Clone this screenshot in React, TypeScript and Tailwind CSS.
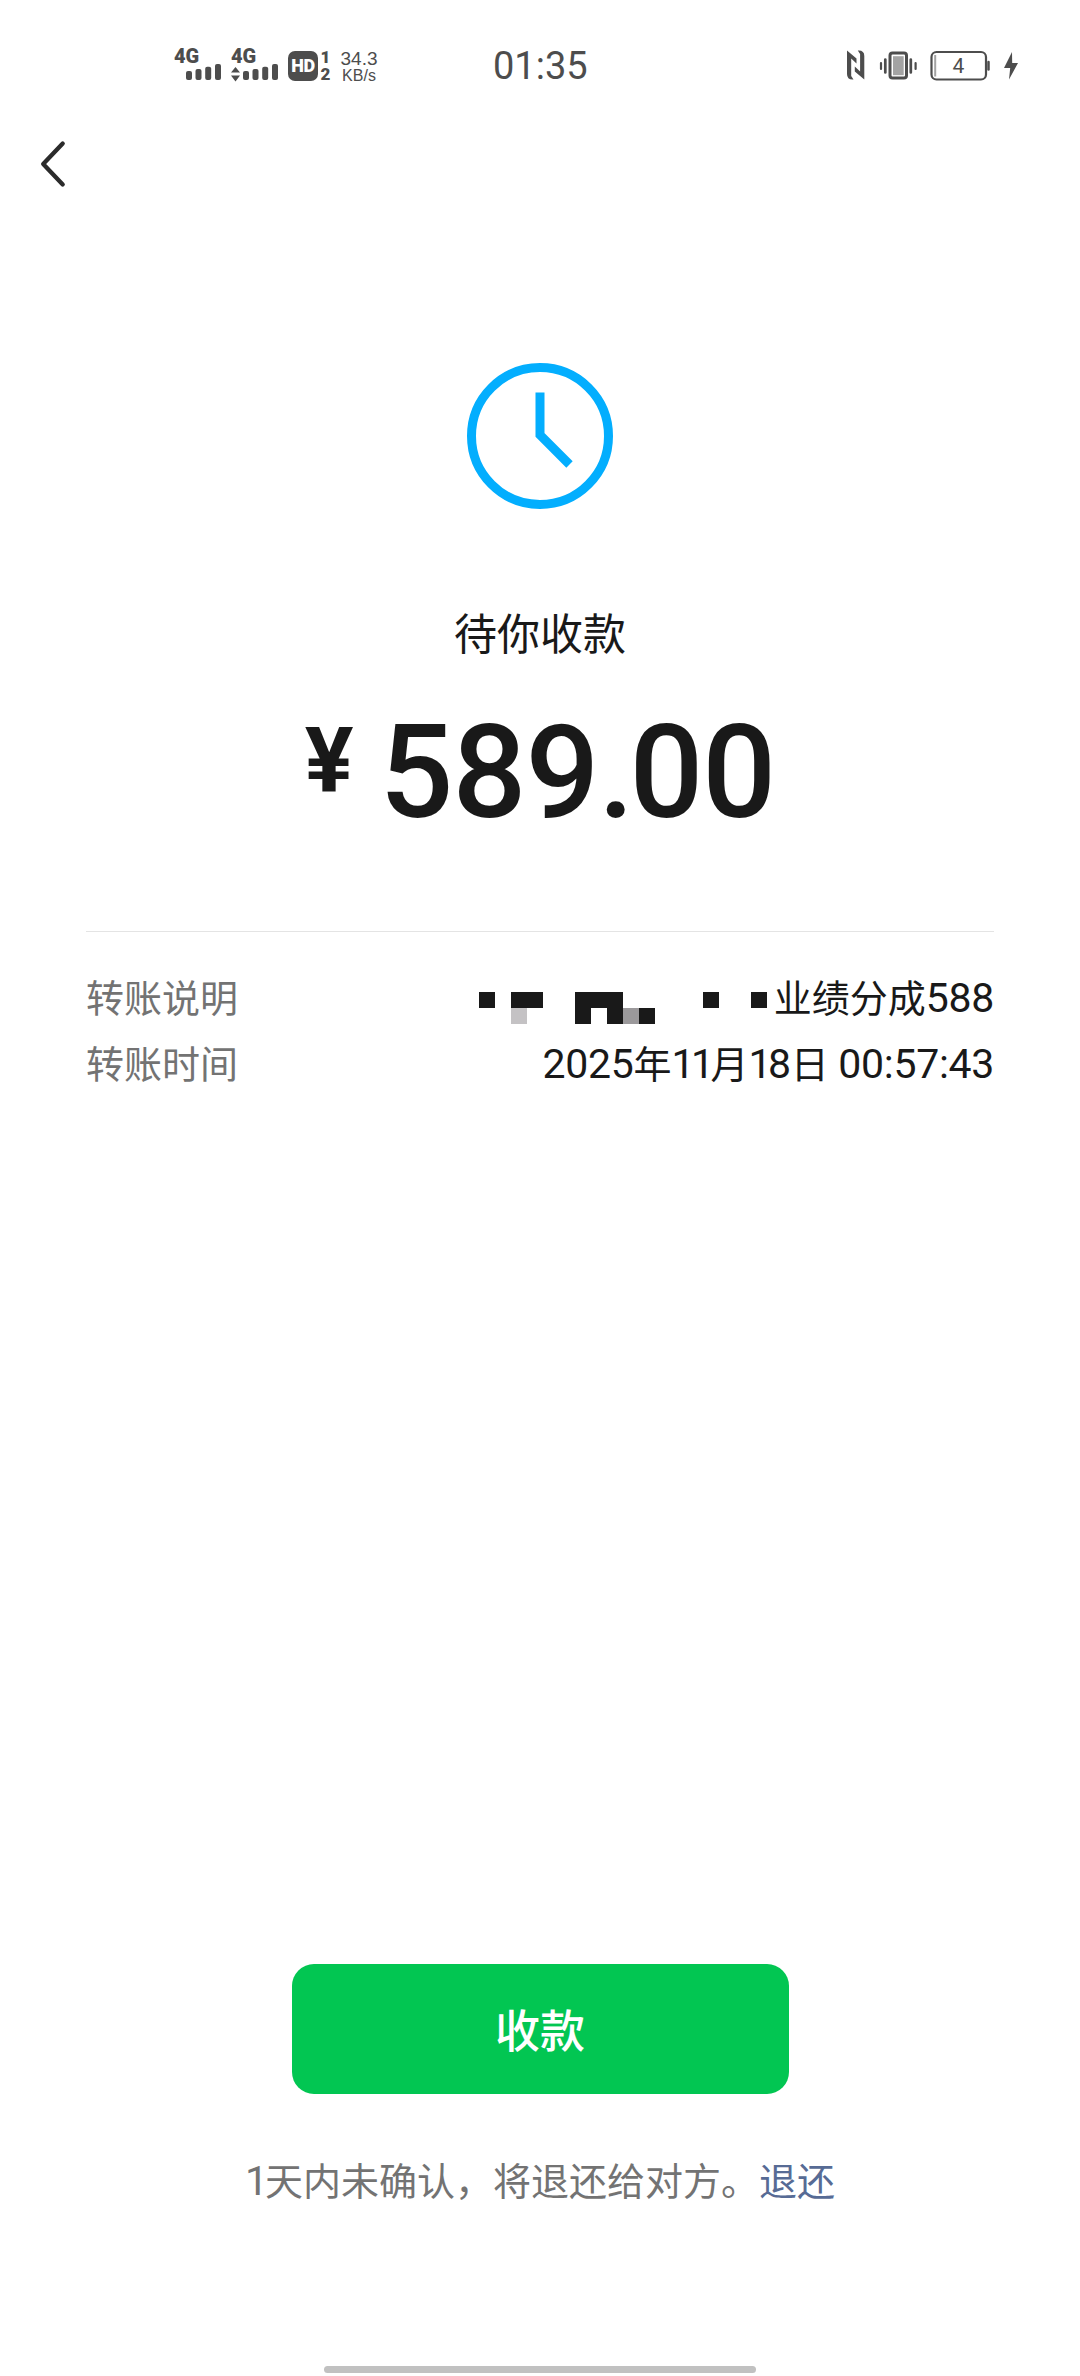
import type { ReactNode } from "react";

// 16px cells of the masked name, two rows
const maskRows: string[][] = [
  ["d", "", "d", "d", "", "", "d", "d", "d", "", "", "", "", "", "d", "", "", "d"],
  ["", "", "l", "", "", "", "d", "", "d", "m", "d", "", "", "", "", "", "", ""],
];

const cellColors: Record<string, string> = {
  d: "bg-[#191919]",
  m: "bg-[#9b999b]",
  l: "bg-[#c4c2c4]",
};

const MaskedName = () => (
  <div className="mt-[26px] flex flex-col self-start">
    {maskRows.map((row, y) => (
      <div key={y} className="flex">
        {row.map((cell, x) => (
          <span key={x} className={`size-4 ${cellColors[cell] ?? ""}`} />
        ))}
      </div>
    ))}
  </div>
);

const Signal = ({ arrows = false }: { arrows?: boolean }) => (
  <div className="flex w-[48px] flex-col">
    <span className="h-[15px] font-['Roboto'] text-[20px] leading-[14px] font-black">4G</span>
    <svg className="h-[18px] w-[48px]" viewBox="0 0 48 18" fill="currentColor">
      {arrows && <path d="M4.5 3 9 8.5H0ZM0 11.500h9L4.500 17.500Z" />}
      <rect x="12" y="7" width="6" height="9" rx="2" />
      <rect x="21.5" y="5" width="6" height="11" rx="2" />
      <rect x="31.2" y="2.7" width="6" height="13.3" rx="2" />
      <rect x="41" y="0" width="6" height="16" rx="2" />
    </svg>
  </div>
);

const StatusBar = () => (
  <header className="flex h-[105px] items-start text-[#4d4d4d]">
    <div className="mt-[49px] ml-[174px] flex w-[319px] items-start">
      <Signal />
      <div className="ml-[9px]">
        <Signal arrows />
      </div>
      <div className="mt-[2px] ml-[9px] flex h-[30px] w-[30px] items-center justify-center rounded-[7px] bg-[#4d4d4d] font-['Roboto'] text-[18px] leading-none font-black tracking-[-0.5px] text-white">
        HD
      </div>
      <div className="ml-[2px] flex w-[11px] flex-col items-center font-['Roboto'] text-[17px] leading-[17px] font-black">
        <span>1</span>
        <span>2</span>
      </div>
      <div className="ml-[8px] flex w-[40px] flex-col items-center font-['Liberation_Sans'] whitespace-nowrap">
        <span className="text-[19px] leading-[19px]">34.3</span>
        <span className="text-[16px] leading-[15px]">KB/s</span>
      </div>
    </div>
    <div className="mt-[46px] w-[94px] font-['Roboto'] text-[38px] leading-[41px] whitespace-nowrap">01:35</div>
    <svg className="mt-[50px] ml-[260px] h-[32px] w-[175px]" viewBox="0 0 175 32" fill="none" stroke="currentColor">
      {/* nfc */}
      <path
        d="M0 .5 9.5 8.500V13.500L4.200 8.500V26L6.500 29.500Q0 30 0 24ZM17.300 29.500 7.800 21.500V16.500L13.100 21.500V4L10.800.500Q17.300 0 17.300 6Z"
        fill="currentColor"
        stroke="none"
      />
      {/* vibrate */}
      <rect x="43" y="3" width="16.5" height="25" rx="2.5" strokeWidth="3" />
      <rect x="46" y="6.2" width="10.7" height="19" fill="#a3a3a3" stroke="none" />
      <path d="M38.3 9.5v13M63.8 9.5v13" strokeWidth="2.7" strokeLinecap="round" />
      <path d="M34 13v6M68.6 13v6" strokeWidth="2.2" strokeLinecap="round" />
      {/* battery */}
      <rect x="84.5" y="2" width="54.5" height="27.5" rx="5" strokeWidth="2.2" />
      <path d="M88.2 5v21.5" stroke="#a3a3a3" strokeWidth="2" />
      <path d="M141.5 12v7.5" strokeWidth="2.5" strokeLinecap="round" />
      <text x="105.5" y="23.3" fill="currentColor" stroke="none" className="font-['Roboto'] text-[21px]">4</text>
      {/* charging */}
      <path d="M165 2 157 18h6.2L162 29.5 171 13h-5.8Z" fill="currentColor" stroke="none" />
    </svg>
  </header>
);

const ClockIcon = () => (
  <svg className="size-[146px]" viewBox="0 0 146 146" fill="none" stroke="#03aefe" strokeWidth="9">
    <circle cx="73" cy="73" r="68.5" />
    <path d="M73 29.5V72L102.5 101.5" />
  </svg>
);

const Num = ({ children }: { children: ReactNode }) => (
  <span className="font-['Roboto'] text-[41px] leading-none tracking-[-0.3px]">{children}</span>
);

const Row = ({ label, children }: { label: string; children: ReactNode }) => (
  <div className="flex h-[66px] items-center justify-between">
    <span className="text-[#737373]">{label}</span>
    <div className="flex h-full items-center text-[#191919]">{children}</div>
  </div>
);

export default function App() {
  return (
    <div className="flex h-[2376px] w-[1080px] flex-col bg-white font-['Roboto','Noto_Sans_CJK_SC',sans-serif] text-[#191919]">
      <StatusBar />
      <nav className="h-[118px] pt-[35px] pl-[40px]">
        <svg className="h-[48px] w-[26px]" viewBox="0 0 26 48" fill="none" stroke="#2b2b2b" strokeWidth="4.3" strokeLinecap="round" strokeLinejoin="round">
          <path d="M22.7 3.5 3.2 24 22.7 44.5" />
        </svg>
      </nav>

      <main className="flex flex-col items-center pt-[140px]">
        <ClockIcon />
        <h1 className="mt-[96px] text-[43px] leading-[60px] font-normal">待你收款</h1>
        <div className="mt-[34px] flex h-[130px] items-start font-['Roboto'] whitespace-nowrap">
          <span className="mt-[17px] mr-[26px] text-[91px] leading-[91px] font-bold">¥</span>
          <span className="mt-[9px] text-[130px] leading-[130px] font-medium tracking-[-1px]">
            589<span className="tracking-[-5px]">.</span>00
          </span>
        </div>

        <section className="mt-[102px] w-[908px] border-t border-[#e4e4e4] pt-[34px] text-[38px] leading-[54px]">
          <Row label="转账说明">
            <MaskedName />
            <span className="ml-[7px]">
              业绩分成<Num>588</Num>
            </span>
          </Row>
          <Row label="转账时间">
            <span>
              <Num>2025</Num>年<Num><span className="tracking-[-3.5px]">11</span></Num>月
              <Num><span className="tracking-[-3.5px]">1</span>8</Num>日 <Num>00:57:43</Num>
            </span>
          </Row>
        </section>
      </main>

      <footer className="mt-auto flex flex-col items-center">
        <button className="h-[130px] w-[497px] rounded-[22px] bg-[#02c652] pt-[8px] text-[45px] font-medium text-white">收款</button>
        <p className="mt-[61px] text-[38px] leading-[54px] text-[#737373]">
          <Num><span className="tracking-[-3px]">1</span></Num>天内未确认，将退还给对方。
          <a className="text-[#576b95]">退还</a>
        </p>
        <div className="mt-[157px] mb-[3px] h-[7px] w-[432px] rounded-full bg-[#c1c1c1]" />
      </footer>
    </div>
  );
}
